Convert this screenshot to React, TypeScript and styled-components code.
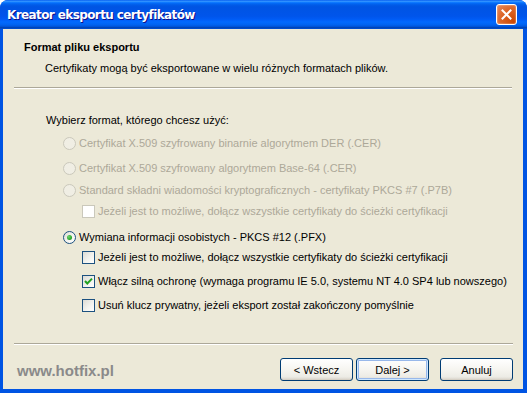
import React from 'react'
import styled, { createGlobalStyle, css } from 'styled-components'

const GlobalStyle = createGlobalStyle`
	html, body {
		margin: 0;
		padding: 0;
		width: 527px;
		height: 393px;
		overflow: hidden;
		background: #ffffff;
	}
	* {
		box-sizing: border-box;
	}
`

type Option = {
	kind: 'radio' | 'check'
	label: string
	checked?: boolean
	disabled?: boolean
	indent?: boolean
	mt: number
}

const options: Option[] = [
	{ kind: 'radio', label: 'Certyfikat X.509 szyfrowany binarnie algorytmem DER (.CER)', disabled: true, mt: 8 },
	{ kind: 'radio', label: 'Certyfikat X.509 szyfrowany algorytmem Base-64 (.CER)', disabled: true, mt: 9 },
	{ kind: 'radio', label: 'Standard składni wiadomości kryptograficznych - certyfikaty PKCS #7 (.P7B)', disabled: true, mt: 6 },
	{ kind: 'check', label: 'Jeżeli jest to możliwe, dołącz wszystkie certyfikaty do ścieżki certyfikacji', disabled: true, indent: true, mt: 5 },
	{ kind: 'radio', label: 'Wymiana informacji osobistych - PKCS #12 (.PFX)', checked: true, mt: 10 },
	{ kind: 'check', label: 'Jeżeli jest to możliwe, dołącz wszystkie certyfikaty do ścieżki certyfikacji', indent: true, mt: 4 },
	{ kind: 'check', label: 'Włącz silną ochronę (wymaga programu IE 5.0, systemu NT 4.0 SP4 lub nowszego)', checked: true, indent: true, mt: 8 },
	{ kind: 'check', label: 'Usuń klucz prywatny, jeżeli eksport został zakończony pomyślnie', indent: true, mt: 8 }
]

const App = () => {
	return (
		<>
			<GlobalStyle />
			<Window>
				<TitleBar>
					<TitleText>Kreator eksportu certyfikatów</TitleText>
					<CloseButton aria-label='Zamknij'>
						<svg width='11' height='11' viewBox='0 0 11 11'>
							<path d='M1.5 1.5 L9.5 9.5 M9.5 1.5 L1.5 9.5' stroke='#fff' strokeWidth='2' strokeLinecap='square' />
						</svg>
					</CloseButton>
				</TitleBar>
				<Body>
					<Header>
						<HeaderTitle>Format pliku eksportu</HeaderTitle>
						<HeaderSubtitle>Certyfikaty mogą być eksportowane w wielu różnych formatach plików.</HeaderSubtitle>
					</Header>
					<Separator />
					<Content>
						<Prompt>Wybierz format, którego chcesz użyć:</Prompt>
						{options.map((o, i) => (
							<OptionRow key={i} $mt={o.mt} $indent={o.indent}>
								{o.kind === 'radio' ? (
									<Radio $disabled={o.disabled}>{o.checked && <RadioDot />}</Radio>
								) : (
									<CheckBox $disabled={o.disabled}>
										{o.checked && (
											<svg width='9' height='9' viewBox='0 0 9 9'>
												<path d='M1 4 L3.3 6.5 L8 1.6' stroke='#21A121' strokeWidth='2' fill='none' />
											</svg>
										)}
									</CheckBox>
								)}
								<OptionLabel $disabled={o.disabled}>{o.label}</OptionLabel>
							</OptionRow>
						))}
					</Content>
					<Separator $wide />
					<Footer>
						<Brand>www.hotfix.pl</Brand>
						<ButtonGroup>
							<Button>&lt; Wstecz</Button>
							<Button $default>Dalej &gt;</Button>
							<Button $spaced>Anuluj</Button>
						</ButtonGroup>
					</Footer>
				</Body>
			</Window>
		</>
	)
}

const uiFont = `'Liberation Sans', Arial, sans-serif`

const Window = styled.div`
	width: 527px;
	height: 393px;
	display: flex;
	flex-direction: column;
	background: #0054e3;
	border-radius: 8px 8px 0 0;
	overflow: hidden;
	font-family: ${uiFont};
	font-size: 11px;
	color: #000;
`

const TitleBar = styled.div`
	height: 29px;
	flex: none;
	display: flex;
	align-items: center;
	justify-content: space-between;
	padding: 0 10px 0 7px;
	background: linear-gradient(
		to bottom,
		#0058ee 0%,
		#3593ff 4%,
		#288eff 6%,
		#127dff 8%,
		#036ffc 10%,
		#0262ee 14%,
		#0057e5 20%,
		#0054e3 24%,
		#0055eb 56%,
		#005bf5 66%,
		#026afe 76%,
		#0062ef 86%,
		#0052d6 92%,
		#0040ab 96%,
		#0054e3 100%
	);
`

const TitleText = styled.div`
	color: #fff;
	font-family: 'DejaVu Sans', sans-serif;
	font-weight: bold;
	font-size: 12px;
	letter-spacing: -0.6px;
	text-shadow: 1px 1px #0f1089;
	margin-top: 1px;
`

const CloseButton = styled.div`
	width: 21px;
	height: 21px;
	display: flex;
	align-items: center;
	justify-content: center;
	border: 1px solid #fff;
	border-radius: 3px;
	background: radial-gradient(circle at 90% 90%, #cc4600 0%, #dc6527 55%, #e68b60 100%);
	box-shadow: inset 0 0 1px 1px rgba(255, 255, 255, 0.2);
`

const Body = styled.div`
	flex: 1;
	display: flex;
	flex-direction: column;
	margin: 0 4px 4px 3px;
	background: #ece9d8;
`

const Header = styled.div`
	padding: 12px 0 0 21px;
`

const HeaderTitle = styled.div`
	font-weight: bold;
	line-height: 13px;
`

const HeaderSubtitle = styled.div`
	margin: 8px 0 0 21px;
	line-height: 13px;
`

const Separator = styled.div<{ $wide?: boolean }>`
	flex: none;
	height: 2px;
	margin: ${(p) => (p.$wide ? '0 10px 0 11px' : '12px 11px 0 11px')};
	border-top: 1px solid #aca899;
	border-bottom: 1px solid #fff;
`

const Content = styled.div`
	flex: 1;
	padding: 25px 0 0 43px;
`

const Prompt = styled.div`
	line-height: 13px;
`

const OptionRow = styled.div<{ $mt: number; $indent?: boolean }>`
	display: flex;
	align-items: center;
	height: 16px;
	margin-top: ${(p) => p.$mt}px;
	padding-left: ${(p) => (p.$indent ? 36 : 17)}px;
`

const controlBase = css<{ $disabled?: boolean }>`
	width: 13px;
	height: 13px;
	flex: none;
	display: flex;
	align-items: center;
	justify-content: center;
	border: 1px solid ${(p) => (p.$disabled ? '#cac8bb' : '#1c5180')};
`

const Radio = styled.div<{ $disabled?: boolean }>`
	${controlBase};
	border-radius: 50%;
	background: ${(p) =>
		p.$disabled ? '#f0eee4' : 'linear-gradient(135deg, #dcdbd5 0%, #f2f2ee 50%, #ffffff 100%)'};
`

const RadioDot = styled.div`
	width: 5px;
	height: 5px;
	border-radius: 50%;
	background: radial-gradient(circle at 35% 35%, #6fd36f 0%, #21a121 70%, #1a8a1a 100%);
`

const CheckBox = styled.div<{ $disabled?: boolean }>`
	${controlBase};
	background: ${(p) =>
		p.$disabled ? '#ffffff' : 'linear-gradient(135deg, #dcdbd5 0%, #f2f2ee 55%, #ffffff 100%)'};
`

const OptionLabel = styled.span<{ $disabled?: boolean }>`
	margin-left: 3px;
	white-space: nowrap;
	color: ${(p) => (p.$disabled ? '#aca899' : '#000')};
`

const Footer = styled.div`
	flex: none;
	height: 44px;
	display: flex;
	align-items: flex-start;
	justify-content: space-between;
	padding: 13px 10px 0 14px;
`

const Brand = styled.div`
	font-family: 'Liberation Sans', Arial, sans-serif;
	font-weight: bold;
	font-size: 15px;
	color: #8a8a8a;
	margin-top: 4px;
`

const ButtonGroup = styled.div`
	display: flex;
	gap: 3px;
`

const Button = styled.button<{ $default?: boolean; $spaced?: boolean }>`
	width: 73px;
	height: 23px;
	margin-left: ${(p) => (p.$spaced ? 8 : 0)}px;
	padding: 0;
	font-family: ${uiFont};
	font-size: 11px;
	color: #000;
	border: 1px solid #003c74;
	border-radius: 3px;
	background: linear-gradient(to bottom, #ffffff 0%, #f6f5f0 50%, #ecebe5 85%, #d6d0c5 100%);
	box-shadow: ${(p) =>
		p.$default ? 'inset 0 0 0 1px #cee7ff, inset 0 0 0 2px #98b8ea' : 'inset 0 -1px 0 #d6d0c5'};
`

export default App
